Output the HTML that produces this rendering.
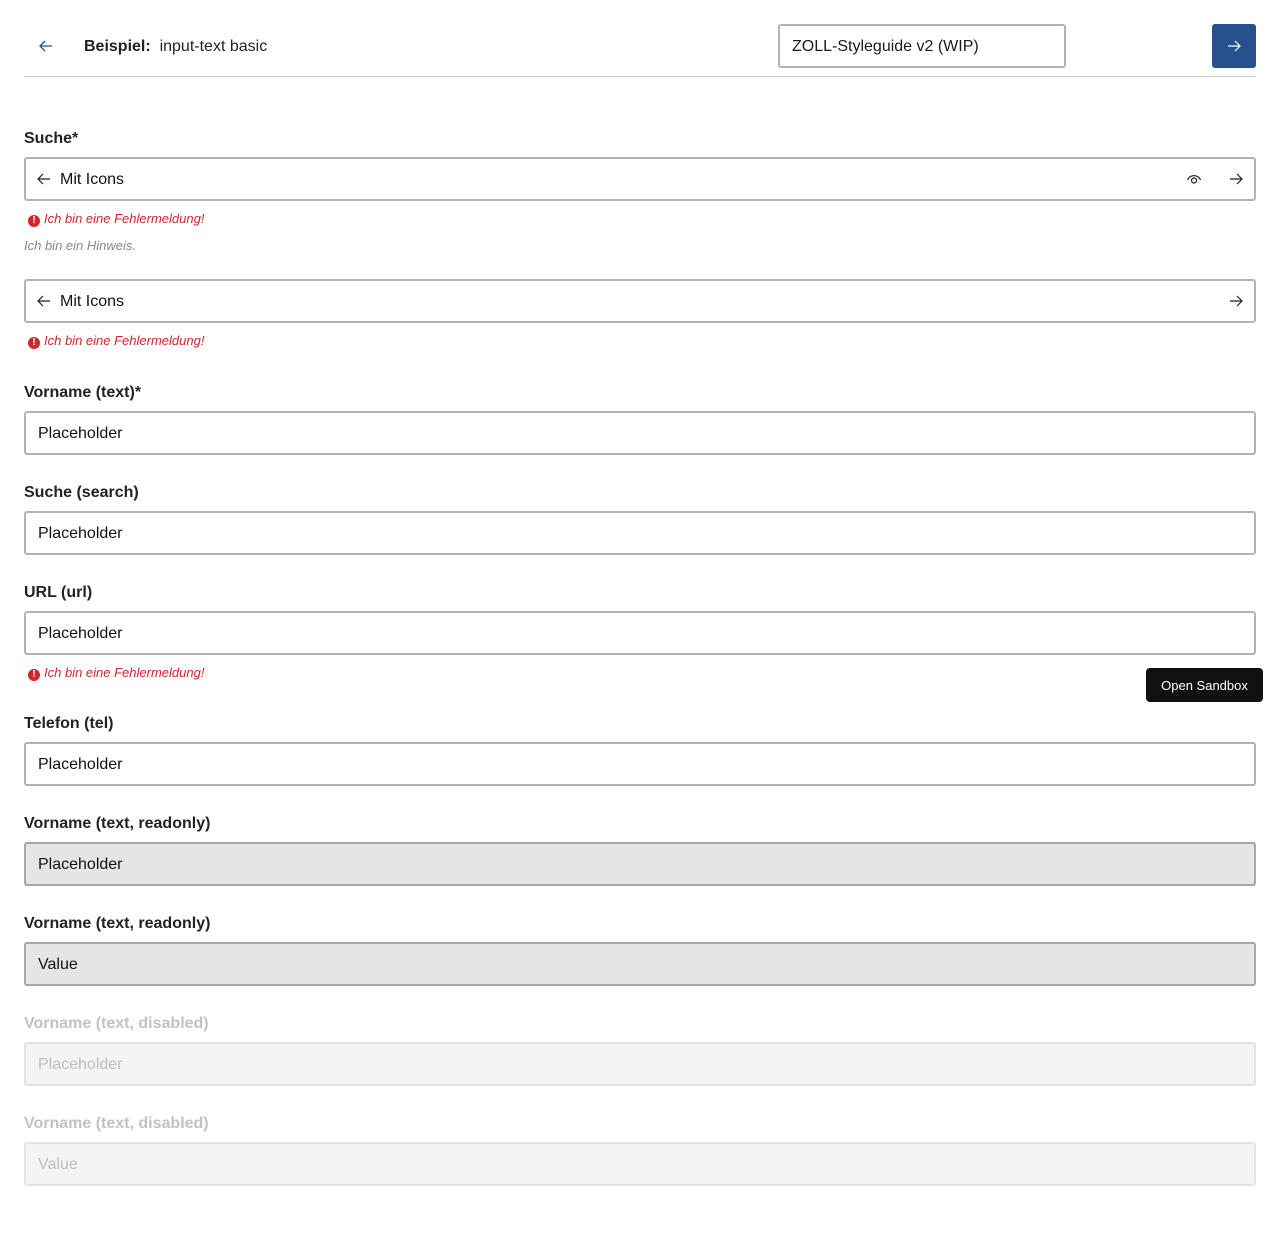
<!DOCTYPE html>
<html><head><meta charset="utf-8"><style>
*{box-sizing:border-box;margin:0;padding:0}
body{width:1280px;height:1234px;background:#fff;font-family:"Liberation Sans",sans-serif;color:#1a1a1a;position:relative;overflow:hidden}
.a{position:absolute}
.lbl{position:absolute;left:24px;font-size:16px;font-weight:bold;color:#222;line-height:20px;margin-top:2px}
.inp{position:absolute;left:24px;width:1232px;height:44px;border:2px solid #b3b3b3;border-radius:3px;font-size:16px;line-height:42px;padding-left:12px;color:#111}
.ro{background:#e5e5e5;border-color:#a8a8a8}
.dis{background:#f4f4f4;border-color:#e3e3e3;color:#bdbdbd}
.err{position:absolute;left:28px;font-size:13px;font-style:italic;color:#d0262d;line-height:16px;margin-top:1px}
.err i{display:inline-block;width:12px;height:12px;border-radius:50%;background:#d0262d;color:#fff;font-size:10px;font-style:normal;font-weight:bold;text-align:center;line-height:12px;margin-right:4px;vertical-align:0}
svg{position:absolute}
</style></head><body>
<svg style="left:38px;top:39px" width="16" height="14" viewBox="0 0 16 14"><path d="M14 7H2M7 2L2 7l5 5" fill="none" stroke="#26508e" stroke-width="1.3"/></svg>
<div class="a" style="left:84px;top:37px;font-size:16px;line-height:20px;color:#222"><b>Beispiel:</b>&nbsp; input-text basic</div>
<div class="a" style="left:778px;top:24px;width:288px;height:44px;border:2px solid #b3b3b3;border-radius:3px;font-size:16px;line-height:42px;padding-left:12px">ZOLL-Styleguide v2 (WIP)</div>
<div class="a" style="left:1212px;top:24px;width:44px;height:44px;background:#26508e;border-radius:3px"></div>
<svg style="left:1227px;top:39px" width="14" height="14" viewBox="0 0 14 14"><path d="M1 7h12M8 2l5 5-5 5" fill="none" stroke="#fff" stroke-width="1.2"/></svg>
<div class="a" style="left:24px;top:76px;width:1232px;height:1px;background:#c8c8c8"></div>

<div class="lbl" style="top:127px">Suche*</div>
<div class="inp" style="top:157px;padding-left:34px">Mit Icons</div>
<svg style="left:37px;top:173px" width="14" height="12" viewBox="0 0 14 12"><path d="M13 6H1M6 1L1 6l5 5" fill="none" stroke="#222" stroke-width="1.2"/></svg>
<svg style="left:1186px;top:172px" width="16" height="14" viewBox="0 0 16 14"><path d="M1.5 8a7 7 0 0 1 13 0" fill="none" stroke="#222" stroke-width="1.2"/><circle cx="8" cy="8.5" r="2.5" fill="none" stroke="#222" stroke-width="1.2"/></svg>
<svg style="left:1229px;top:173px" width="14" height="12" viewBox="0 0 14 12"><path d="M1 6h12M8 1l5 5-5 5" fill="none" stroke="#222" stroke-width="1.2"/></svg>
<div class="err" style="top:210px"><i>!</i>Ich bin eine Fehlermeldung!</div>
<div class="a" style="left:24px;top:238px;font-size:13px;font-style:italic;color:#888;line-height:16px">Ich bin ein Hinweis.</div>

<div class="inp" style="top:279px;padding-left:34px">Mit Icons</div>
<svg style="left:37px;top:295px" width="14" height="12" viewBox="0 0 14 12"><path d="M13 6H1M6 1L1 6l5 5" fill="none" stroke="#222" stroke-width="1.2"/></svg>
<svg style="left:1229px;top:295px" width="14" height="12" viewBox="0 0 14 12"><path d="M1 6h12M8 1l5 5-5 5" fill="none" stroke="#222" stroke-width="1.2"/></svg>
<div class="err" style="top:332px"><i>!</i>Ich bin eine Fehlermeldung!</div>

<div class="lbl" style="top:381px">Vorname (text)*</div>
<div class="inp" style="top:411px">Placeholder</div>
<div class="lbl" style="top:481px">Suche (search)</div>
<div class="inp" style="top:511px">Placeholder</div>
<div class="lbl" style="top:581px">URL (url)</div>
<div class="inp" style="top:611px">Placeholder</div>
<div class="err" style="top:664px"><i>!</i>Ich bin eine Fehlermeldung!</div>
<div class="a" style="left:1146px;top:668px;width:117px;height:34px;background:#111;border-radius:4px;color:#fff;font-size:13px;line-height:35px;text-align:center">Open Sandbox</div>
<div class="lbl" style="top:712px">Telefon (tel)</div>
<div class="inp" style="top:742px">Placeholder</div>
<div class="lbl" style="top:812px">Vorname (text, readonly)</div>
<div class="inp ro" style="top:842px">Placeholder</div>
<div class="lbl" style="top:912px">Vorname (text, readonly)</div>
<div class="inp ro" style="top:942px">Value</div>
<div class="lbl" style="top:1012px;color:#c2c2c2">Vorname (text, disabled)</div>
<div class="inp dis" style="top:1042px">Placeholder</div>
<div class="lbl" style="top:1112px;color:#c2c2c2">Vorname (text, disabled)</div>
<div class="inp dis" style="top:1142px">Value</div>
</body></html>
